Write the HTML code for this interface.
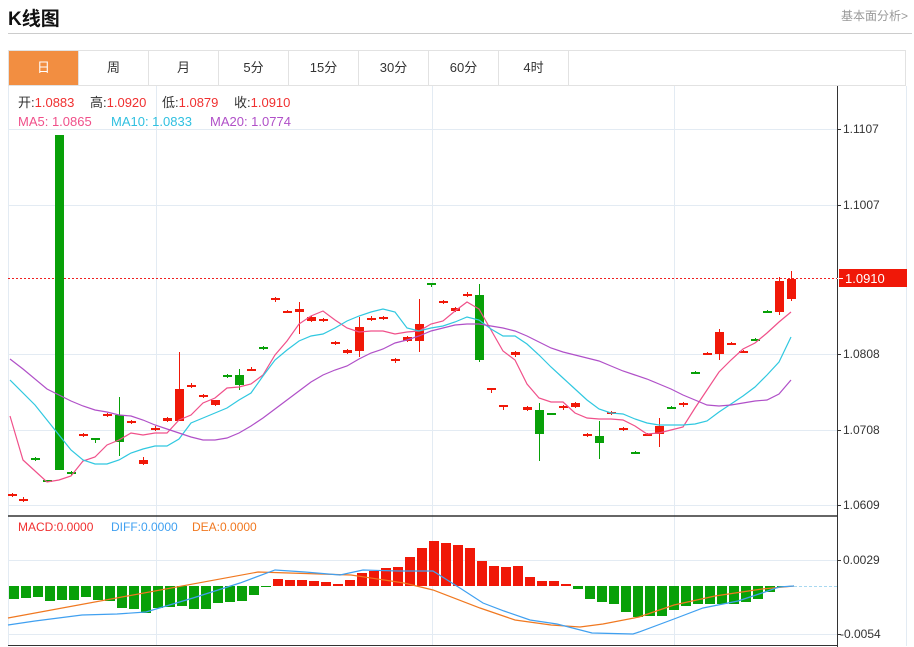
<!DOCTYPE html>
<html><head><meta charset="utf-8"><style>
body{margin:0;width:914px;height:647px;background:#fff;font-family:"Liberation Sans","Noto Sans CJK SC",sans-serif;overflow:hidden;position:relative}
.t{position:absolute;left:8px;top:4px;font-size:19px;font-weight:bold;color:#111}
.r{position:absolute;right:6px;top:7px;font-size:12px;color:#999}
.hl{position:absolute;left:8px;top:33px;width:904px;height:1px;background:#ccc}
.tabs{position:absolute;left:8px;top:50px;width:898px;height:36px;border:1px solid #e2e2e2;border-bottom:1px solid #e2e2e2;box-sizing:border-box;display:flex}
.tabs div{width:70px;border-right:1px solid #e2e2e2;text-align:center;line-height:34px;font-size:13px;color:#333;box-sizing:border-box}
.tabs div.a{background:#f28e41;color:#fff}
svg{position:absolute;left:0;top:0}
</style></head><body>
<div class="t">K线图</div><div class="r">基本面分析&gt;</div><div class="hl"></div>
<div class="tabs"><div class="a">日</div><div>周</div><div>月</div><div>5分</div><div>15分</div><div>30分</div><div>60分</div><div>4时</div></div>
<svg id="s" width="914" height="647" xmlns="http://www.w3.org/2000/svg" font-family="Liberation Sans, Noto Sans CJK SC, sans-serif">
<g stroke="#e3ebf3" stroke-width="1">
<line x1="8" y1="129.5" x2="837" y2="129.5"/><line x1="8" y1="205.5" x2="837" y2="205.5"/><line x1="8" y1="354.5" x2="837" y2="354.5"/><line x1="8" y1="430.5" x2="837" y2="430.5"/><line x1="8" y1="505.5" x2="837" y2="505.5"/>
<line x1="8" y1="560.5" x2="837" y2="560.5"/><line x1="8" y1="634.5" x2="837" y2="634.5"/>
<line x1="156.5" y1="86" x2="156.5" y2="646"/><line x1="432.5" y1="86" x2="432.5" y2="646"/><line x1="674.5" y1="86" x2="674.5" y2="646"/>
<line x1="8.5" y1="86" x2="8.5" y2="646"/><line x1="906.5" y1="86" x2="906.5" y2="646"/>
</g>
<line x1="837.5" y1="86" x2="837.5" y2="647" stroke="#333"/>
<line x1="8" y1="516" x2="837" y2="516" stroke="#333" stroke-width="1.5"/>
<line x1="8" y1="645.5" x2="837" y2="645.5" stroke="#333"/>
<g font-size="12" fill="#333">
<text x="843" y="133">1.1107</text><text x="843" y="209">1.1007</text><text x="843" y="358">1.0808</text><text x="843" y="434">1.0708</text><text x="843" y="509">1.0609</text>
<text x="843" y="564">0.0029</text><text x="840" y="638">-0.0054</text>
<g stroke="#333"><line x1="837" y1="129.5" x2="841" y2="129.5"/><line x1="837" y1="205.5" x2="841" y2="205.5"/><line x1="837" y1="354.5" x2="841" y2="354.5"/><line x1="837" y1="430.5" x2="841" y2="430.5"/><line x1="837" y1="505.5" x2="841" y2="505.5"/><line x1="837" y1="560.5" x2="841" y2="560.5"/><line x1="837" y1="634.5" x2="841" y2="634.5"/></g>
</g>
<g font-size="13">
<text x="18" y="107" fill="#333">开:<tspan fill="#f03030">1.0883</tspan></text>
<text x="90" y="107" fill="#333">高:<tspan fill="#f03030">1.0920</tspan></text>
<text x="162" y="107" fill="#333">低:<tspan fill="#f03030">1.0879</tspan></text>
<text x="234" y="107" fill="#333">收:<tspan fill="#f03030">1.0910</tspan></text>
<text x="18" y="126" fill="#f0508a">MA5: 1.0865</text>
<text x="111" y="126" fill="#30c0e0">MA10: 1.0833</text>
<text x="210" y="126" fill="#b050c8">MA20: 1.0774</text>
</g>
<g font-size="12"><text x="18" y="531" fill="#f03030">MACD:0.0000</text><text x="111" y="531" fill="#40a0f0">DIFF:0.0000</text><text x="192" y="531" fill="#f07820">DEA:0.0000</text></g>
<line x1="8" y1="278.5" x2="837" y2="278.5" stroke="#f02020" stroke-dasharray="2,2"/>
<rect x="839" y="269" width="68" height="18" fill="#f01808"/>
<text x="845" y="283" fill="#fff" font-size="13">1.0910</text>
<line x1="837" y1="278.5" x2="843" y2="278.5" stroke="#fff"/>
<line x1="794" y1="586.5" x2="837" y2="586.5" stroke="#a8d8f0" stroke-dasharray="3,2"/>
<g id="c"></g>
</svg>
<script>
var C=[[12,494,496,493,497,'r'],[23,499,501,497,502,'r'],[35,458,460,457,461,'g'],[47,480,482,480,482,'g'],[59,135,470,135,470,'g'],[71,472,474,471,475,'g'],[83,434,436,433,437,'r'],[95,438,440,438,443,'g'],[107,414,416,413,417,'r'],[119,415,442,397,456,'g'],[131,421,423,420,424,'r'],[143,460,464,457,465,'r'],[155,428,430,426,431,'r'],[167,418,421,417,422,'r'],[179,389,421,352,421,'r'],[191,385,387,383,388,'r'],[203,395,397,394,398,'r'],[215,400,405,400,406,'r'],[227,375,376,374,378,'g'],[239,375,385,369,390,'g'],[251,369,370,367,371,'r'],[263,347,349,346,350,'g'],[275,298,299,297,302,'r'],[287,311,312,310,313,'r'],[299,309,312,302,334,'r'],[311,317,321,316,322,'r'],[323,319,321,318,322,'r'],[335,342,344,341,345,'r'],[347,350,353,349,354,'r'],[359,327,351,317,357,'r'],[371,318,320,316,321,'r'],[383,317,319,316,320,'r'],[395,359,361,358,363,'r'],[407,337,341,336,342,'r'],[419,324,341,299,352,'r'],[431,283,285,283,287,'g'],[443,301,302,300,304,'r'],[455,308,311,307,312,'r'],[467,294,296,292,297,'r'],[479,295,360,284,362,'g'],[491,388,389,388,393,'r'],[503,405,407,405,410,'r'],[515,352,355,351,357,'r'],[527,407,410,406,411,'r'],[539,410,434,403,461,'g'],[551,413,415,413,415,'g'],[563,406,408,405,410,'r'],[575,403,407,402,408,'r'],[587,434,436,433,437,'r'],[599,436,443,421,459,'g'],[611,412,413,411,415,'r'],[623,428,430,427,431,'r'],[635,452,453,451,454,'g'],[647,434,435,433,436,'r'],[659,426,434,418,447,'r'],[671,407,408,406,409,'g'],[683,403,404,402,407,'r'],[695,372,373,371,374,'g'],[707,353,354,352,355,'r'],[719,332,354,329,360,'r'],[731,343,344,342,345,'r'],[743,351,352,350,353,'r'],[755,339,340,338,341,'g'],[767,311,312,310,313,'g'],[779,281,312,277,315,'r'],[791,279,299,271,301,'r']];
var M=[599,598,597,601,600,600,597,600,601,608,609,613,608,607,606,609,609,603,602,601,595,587,579,580,580,581,582,584,580,573,571,568,567,557,548,541,543,545,548,561,566,567,566,577,581,581,584,589,599,602,604,612,617,616,616,610,606,604,604,604,604,602,599,592,587,586];
var h='';
C.forEach(function(c,i){var col=c[5]=='r'?'#f01808':'#08a008';var x=c[0];
h+='<line x1="'+(x+.5)+'" y1="'+c[3]+'" x2="'+(x+.5)+'" y2="'+c[4]+'" stroke="'+col+'"/>';
h+='<rect x="'+(x-4)+'" y="'+c[1]+'" width="9" height="'+Math.max(2,c[2]-c[1])+'" fill="'+col+'"/>';
var v=M[i],bx=12+12*i-3;
if(v<586)h+='<rect x="'+bx+'" y="'+v+'" width="10" height="'+(586-v)+'" fill="#f01808"/>';
else if(v>586)h+='<rect x="'+bx+'" y="586" width="10" height="'+(v-586)+'" fill="#08a008"/>';
});
function pl(p,c){return '<polyline fill="none" stroke="'+c+'" stroke-width="1.2" points="'+p+'"/>';}
h+=pl("10,416 23,460 47,482 59,480 71,476 83,461 95,457 107,445 119,440 131,433 143,435 155,433 167,433 179,420 191,415 203,403 215,398 227,388 239,387 251,384 263,375 275,355 287,341 299,324 311,316 323,311 335,320 347,328 359,332 371,331 383,331 395,334 407,332 419,331 431,324 443,321 455,311 467,302 479,309 491,330 503,351 515,360 527,384 539,398 551,402 563,402 575,413 587,418 599,419 611,419 623,420 635,426 647,434 659,433 671,430 683,427 695,408 707,390 719,372 731,360 743,349 755,343 767,333 779,322 791,312","#f0508a");
h+=pl("10,380 35,405 47,420 59,435 71,450 83,460 95,464 107,464 119,460 131,453 143,449 155,446 167,446 179,439 191,423 203,418 215,413 227,408 239,400 251,393 263,376 275,360 287,350 299,341 311,336 323,334 335,328 347,321 359,316 371,312 383,309 395,312 407,328 419,331 431,328 443,326 455,322 467,317 479,320 491,329 503,336 515,336 527,344 539,355 551,367 563,378 575,389 587,400 599,409 611,413 623,414 635,419 647,423 659,425 671,425 683,425 695,424 707,421 719,412 731,404 743,396 755,387 767,375 779,362 791,337","#30c8e0");
h+=pl("10,359 23,369 47,389 59,395 71,401 83,406 95,410 107,412 119,415 131,416 143,420 155,425 167,429 179,433 191,437 203,440 215,440 227,438 239,433 251,426 263,418 275,409 287,400 299,391 311,382 323,375 335,370 347,366 359,359 371,353 383,349 395,343 407,340 419,336 431,331 443,328 455,325 467,324 479,324 491,326 503,328 515,331 527,336 539,342 551,348 563,352 575,355 587,358 599,361 611,366 623,371 635,375 647,379 659,384 671,389 683,395 695,400 707,405 719,406 731,405 743,403 755,401 767,400 779,394 791,380","#b050c8");
h+=pl("8,618 258,572 351,575 404,583 433,590 480,608 515,620 551,625 580,627 603,624 639,617 674,605 715,596 762,589 794,586","#f07820");
h+=pl("8,625 35,621 82,615 117,614 146,612 193,598 240,583 275,570 305,572 340,575 363,570 398,571 433,571 463,590 483,603 504,611 530,620 557,624 592,633 633,634 639,632 674,619 703,608 738,601 762,593 779,587 794,586","#40a0f0");
document.getElementById('c').innerHTML=h;
</script>
</body></html>
